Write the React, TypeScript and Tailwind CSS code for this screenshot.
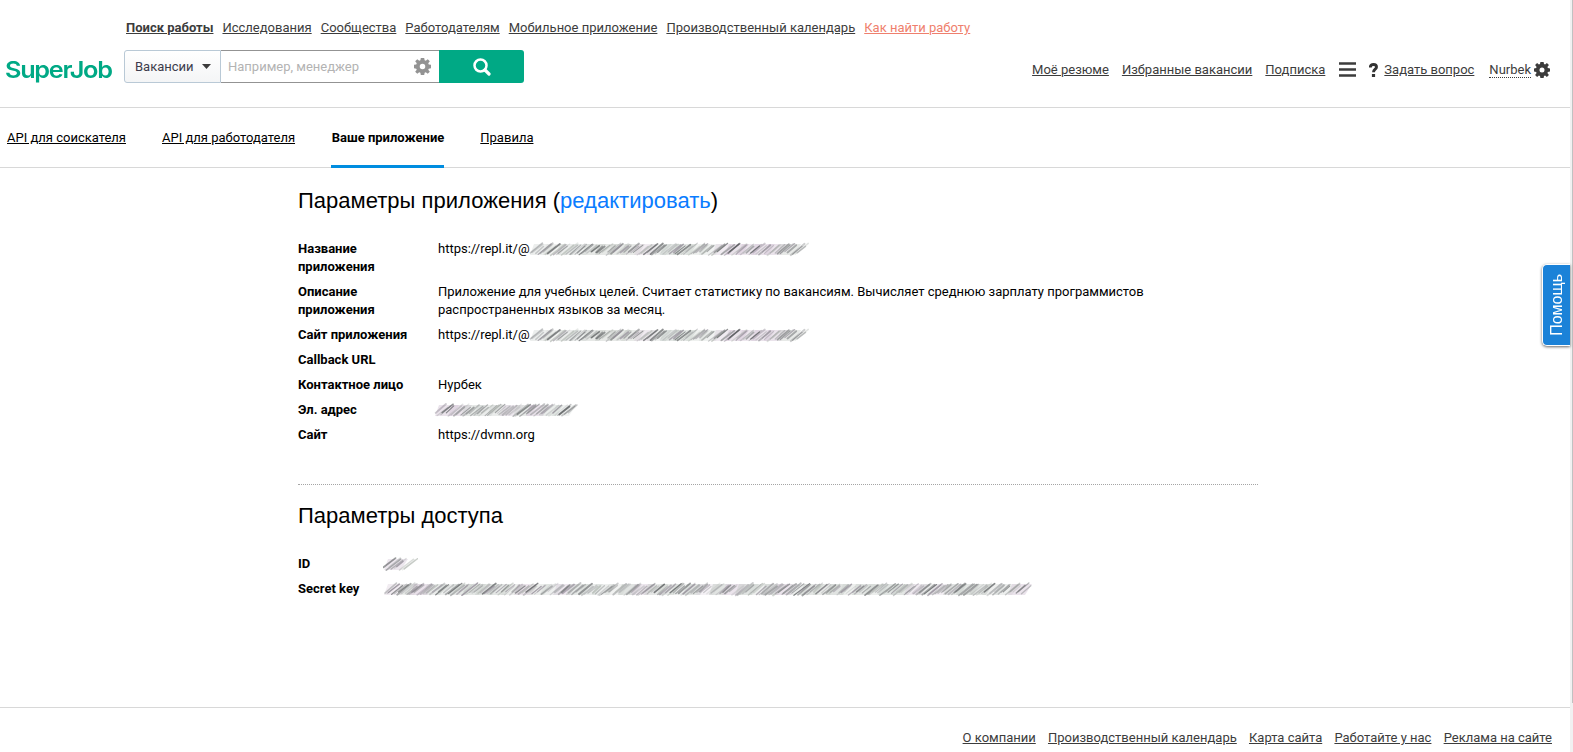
import type { ReactNode } from "react";

type Pt = { w: number; seed: number; tint?: string };

/** Hatched smudge that covers a private value. */
function Scribble({ w, seed, tint = "#d6c8d8" }: Pt) {
  let s = seed;
  const rnd = () => {
    s = (s * 16807) % 2147483647;
    return s / 2147483647;
  };
  const tones = ["#505355", "#77797b", "#8f9193", "#a9abad", "#8f8894", "#b3b9b3"];
  const strokes = [];
  for (let x = 0; x < w - 13; x += 2.6) {
    const top = 3 + rnd() * 3.5;
    const bottom = 11.5 + rnd() * 4;
    strokes.push({
      x1: x + rnd() * 2,
      y1: bottom,
      x2: x + (bottom - top) * 1.35,
      y2: top,
      c: tones[Math.floor(rnd() * tones.length)],
      o: 0.25 + rnd() * 0.5,
      t: 1 + rnd() * 1,
    });
  }
  const patches = [];
  for (let x = -2; x < w - 26; x += 13) patches.push({ x, c: rnd() > 0.7 ? tint : "#c6ccc8", o: 0.25 + rnd() * 0.3 });
  return (
    <svg width={w} height={18} viewBox={`0 0 ${w} 18`} className="block shrink-0">
      <g className="blur-[0.7px]">
        {patches.map((p, i) => (
          <path key={i} d={`M${p.x + 3} 15L${p.x + 7} 4H${p.x + 27}L${p.x + 20} 15Z`} fill={p.c} opacity={p.o} />
        ))}
        {strokes.map((k, i) => (
          <line key={i} x1={k.x1} y1={k.y1} x2={k.x2} y2={k.y2} stroke={k.c} strokeWidth={k.t} opacity={k.o} strokeLinecap="round" />
        ))}
      </g>
    </svg>
  );
}

function Gear({ size, hole, className }: { size: number; hole: number; className: string }) {
  return (
    <svg width={size} height={size} viewBox="-8 -8 16 16" className={className}>
      <path
        fillRule="evenodd"
        fill="currentColor"
        d={`M-1.6-8H1.6L2-5.9L3.1-5.4L4.9-6.9L6.9-4.9L5.4-3.1L5.9-2L8-1.6V1.6L5.9 2L5.4 3.1L6.9 4.9L4.9 6.9L3.1 5.4L2 5.9L1.6 8H-1.6L-2 5.9L-3.1 5.4L-4.9 6.9L-6.9 4.9L-5.4 3.1L-5.9 2L-8 1.6V-1.6L-5.9-2L-5.4-3.1L-6.9-4.9L-4.9-6.9L-3.1-5.4L-2-5.9ZM${-hole} 0a${hole} ${hole} 0 1 0 ${2 * hole} 0a${hole} ${hole} 0 1 0 ${-2 * hole} 0Z`}
      />
    </svg>
  );
}

function Link({ children, className = "" }: { children: ReactNode; className?: string }) {
  return (
    <a href="#" className={`whitespace-nowrap underline underline-offset-1 ${className}`}>
      {children}
    </a>
  );
}

function Row({ label, wide, children }: { label: ReactNode; wide?: boolean; children?: ReactNode }) {
  return (
    <div className="flex pb-[7px]">
      <dt className={`shrink-0 font-bold ${wide ? "w-[140px]" : "w-[85px]"}`}>{label}</dt>
      <dd className="flex whitespace-nowrap">{children}</dd>
    </div>
  );
}

export default function App() {
  return (
    <div className="flex h-[752px] w-full overflow-hidden bg-white font-['Roboto',sans-serif] text-[13px] leading-[18px] text-black">
      <div className="relative flex min-w-0 flex-1 flex-col">
        <header className="flex h-[108px] shrink-0 border-b border-[#d8d8d8] text-[#3c3c3c]">
          <div className="w-[124px] shrink-0 pt-[54px] pl-[5px]">
            <span className="inline-block origin-left scale-x-[1.075] font-[Inter] text-[23.5px] leading-[32px] font-semibold tracking-[-1.2px] text-[#00a985]">
              SuperJob
            </span>
          </div>
          <div className="flex flex-1 flex-col">
            <nav className="flex gap-[9px] pt-[19px] pl-[2px]">
              <Link className="font-bold">Поиск работы</Link>
              <Link>Исследования</Link>
              <Link>Сообщества</Link>
              <Link>Работодателям</Link>
              <Link>Мобильное приложение</Link>
              <Link>Производственный календарь</Link>
              <Link className="text-[#ef7f6d]">Как найти работу</Link>
            </nav>
            <div className="mt-[13px] flex h-[33px] w-[400px]">
              <div className="flex w-[97px] items-center gap-[8px] rounded-l-[3px] border border-[#b9c9d6] bg-linear-to-b from-white to-[#f4f5f6] pl-[10px] text-[#3c3c4c]">
                Вакансии
                <svg width="9" height="5" viewBox="0 0 9 5">
                  <path d="M0 0H9L4.5 5Z" fill="#3c3c3c" />
                </svg>
              </div>
              <div className="flex flex-1 items-center justify-between border-y border-[#939393] pr-[8px] pl-[7px] text-[#b3b3b3]">
                Например, менеджер
                <Gear size={17} hole={2.6} className="text-[#939393]" />
              </div>
              <div className="flex w-[85px] items-center justify-center rounded-r-[3px] bg-[#00a985]">
                <svg width="18" height="18" viewBox="0 0 18 18" fill="none" stroke="white">
                  <circle cx="7.5" cy="7.5" r="6" strokeWidth="2.5" />
                  <path d="M12 12L16 16" strokeWidth="3.2" strokeLinecap="round" />
                </svg>
              </div>
            </div>
          </div>
          <nav className="flex h-[18px] pt-[61px] pr-[20px]">
            <Link>Моё резюме</Link>
            <Link className="ml-[13px]">Избранные вакансии</Link>
            <Link className="ml-[13px]">Подписка</Link>
            <svg width="17" height="15" viewBox="0 0 17 15" className="mt-[1px] ml-[14px] shrink-0">
              <path d="M0 1.5H17M0 7.5H17M0 13.5H17" stroke="#3c3c3c" strokeWidth="2.6" />
            </svg>
            <svg width="9" height="14" viewBox="0 0 9 14" className="mt-[2px] ml-[13px] shrink-0" fill="none" stroke="#333">
              <path d="M1.3 4.4C1.3 2.4 2.6 1.5 4.5 1.5S7.5 2.5 7.5 4C7.5 6.2 4.5 6.1 4.5 9.2" strokeWidth="2.9" />
              <path d="M4.5 11V14" strokeWidth="3.2" />
            </svg>
            <Link className="ml-[6px]">Задать вопрос</Link>
            <a href="#" className="ml-[15px] h-[17px] border-b border-dotted border-[#3c3c3c]">
              Nurbek
            </a>
            <Gear size={16} hole={2.5} className="mt-px ml-[3px] shrink-0 text-[#3c3c3c]" />
          </nav>
        </header>

        <nav className="flex h-[60px] shrink-0 gap-[36px] border-b border-[#d8d8d8] pt-[21px] pl-[7px]">
          <Link>API для соискателя</Link>
          <Link>API для работодателя</Link>
          <span className="h-[39px] border-b-3 border-[#008de0] pl-[0.6px] font-bold">Ваше приложение</span>
          <Link>Правила</Link>
        </nav>

        <main className="ml-[298px] w-[960px] flex-1">
          <h1 className="pt-[19px] font-['Liberation_Sans',sans-serif] text-[22px] leading-[28px] tracking-[0.02px]">
            Параметры приложения (<a href="#" className="text-[#0a7cff]">редактировать</a>)
          </h1>
          <dl className="pt-[25px]">
            <Row wide label={<>Название<br />приложения</>}>
              https://repl.it/@<span className="-ml-px"><Scribble w={282} seed={71} /></span>
            </Row>
            <Row wide label={<>Описание<br />приложения</>}>
              <p>
                Приложение для учебных целей. Считает статистику по вакансиям. Вычисляет среднюю зарплату программистов
                <br />
                распространенных языков за месяц.
              </p>
            </Row>
            <Row wide label="Сайт приложения">
              https://repl.it/@<span className="-ml-px"><Scribble w={282} seed={71} /></span>
            </Row>
            <Row wide label="Callback URL" />
            <Row wide label="Контактное лицо">Нурбек</Row>
            <Row wide label="Эл. адрес">
              <span className="-ml-[4px]"><Scribble w={146} seed={913} /></span>
            </Row>
            <Row wide label="Сайт">https://dvmn.org</Row>
          </dl>
          <div className="mt-[33px] border-t border-dotted border-[#a5a5a5]" />
          <h2 className="pt-[17px] font-['Liberation_Sans',sans-serif] text-[22px] leading-[28px]">Параметры доступа</h2>
          <dl className="pt-[25px]">
            <Row label="ID"><Scribble w={35} seed={3301} /></Row>
            <Row label="Secret key"><Scribble w={651} seed={5127} /></Row>
          </dl>
        </main>

        <footer className="flex h-[45px] shrink-0 justify-end gap-[12.2px] border-t border-[#d8d8d8] pt-[21px] pr-[18px] text-[#3c3c3c]">
          <Link>О компании</Link>
          <Link>Производственный календарь</Link>
          <Link>Карта сайта</Link>
          <Link>Работайте у нас</Link>
          <Link>Реклама на сайте</Link>
        </footer>

        <button className="absolute top-[264px] right-0 flex h-[82px] w-[28px] items-center justify-center rounded-l-[5px] border border-r-0 border-white bg-[#1b82d8] shadow-[0_1px_3px_rgba(0,0,0,0.6)]">
          <span className="rotate-180 font-['Liberation_Sans',sans-serif] text-[16px] leading-none text-white [writing-mode:vertical-rl]">Помощь</span>
        </button>
      </div>
      <div className="flex w-[3px] shrink-0 justify-end bg-[#f1f1f1]">
        <div className="h-[703px] w-px bg-[#c1c1c1]" />
      </div>
    </div>
  );
}
